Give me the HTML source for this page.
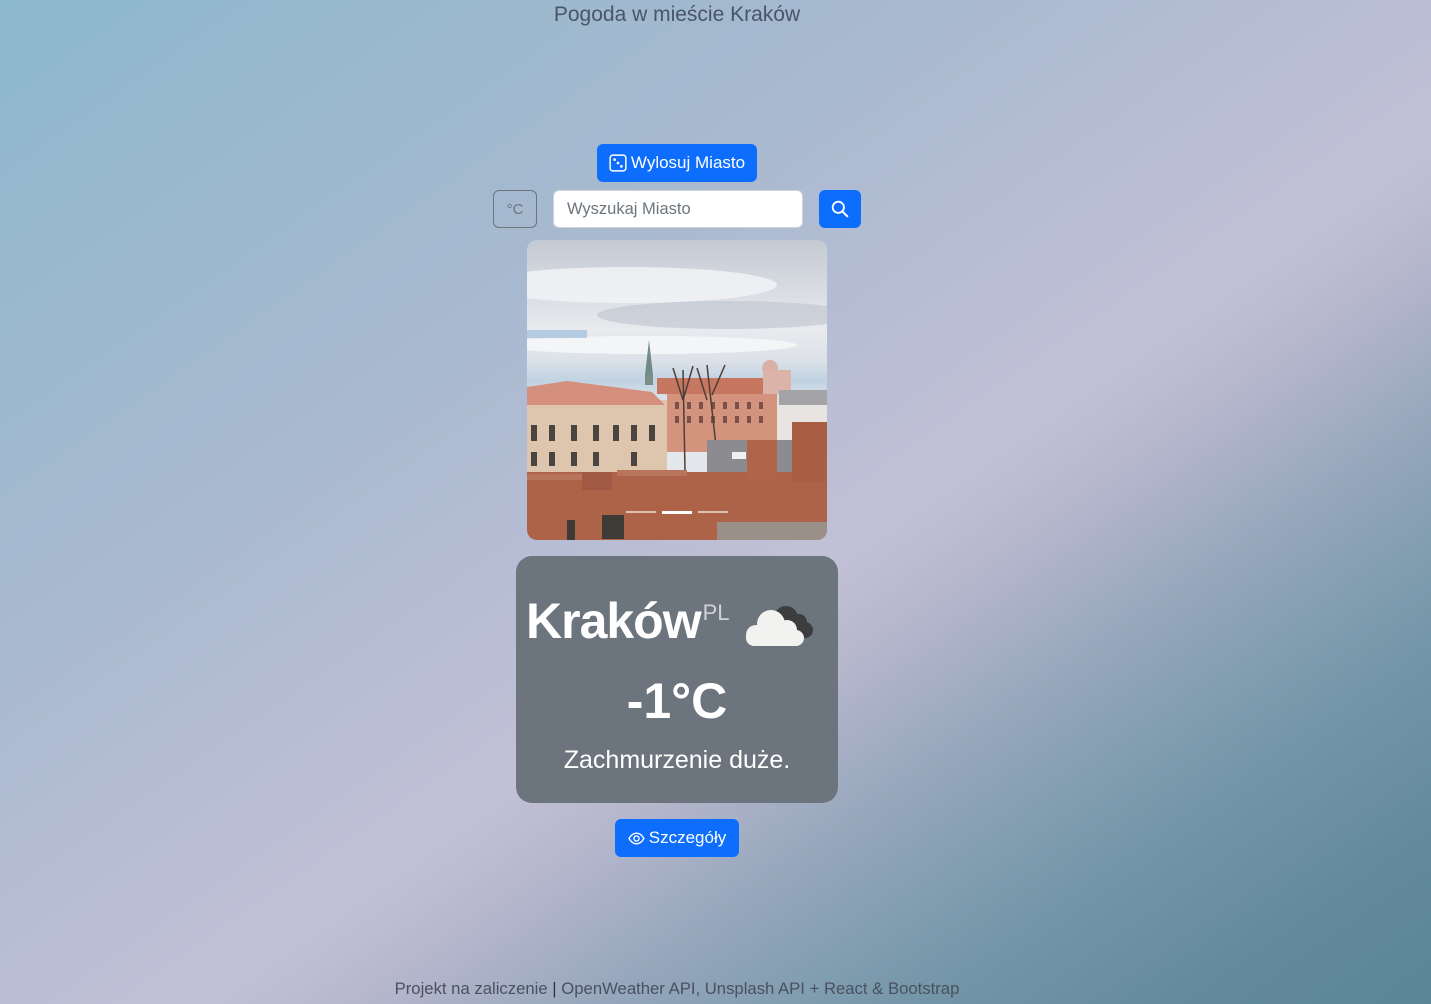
<!DOCTYPE html>
<html><head><meta charset="utf-8"><style>
*{box-sizing:border-box;margin:0;padding:0}
html,body{width:1431px;height:1004px;overflow:hidden}
body{font-family:"Liberation Sans",sans-serif;position:relative;
background:linear-gradient(145deg,#8cb8cc 0%,#a6b9cf 30%,#b6bdd4 46%,#c2c0d6 57%,#b4b6cc 63%,#92a5ba 72%,#7396a8 82%,#628a9b 92%,#5b8596 100%);}
.title{position:absolute;top:3px;left:0;width:1354px;text-align:center;font-size:21px;color:#4a5568}
.btn{position:absolute;background:#0d6efd;color:#fff;border-radius:6px;display:flex;align-items:center;justify-content:center;font-size:17px}
.card{position:absolute;left:516px;top:556px;width:322px;height:247px;background:#6c757d;border-radius:16px;color:#fff}
.foot{position:absolute;top:979px;left:0;width:1354px;text-align:center;font-size:16.7px;color:#4a5160}
</style></head><body>
<div class="title">Pogoda w mieście Kraków</div>
<div class="btn" style="left:597px;top:144px;width:160px;height:38px">
<svg width="18" height="18" viewBox="0 0 16 16" style="margin-right:4px"><rect x="1" y="1" width="14" height="14" rx="2.5" fill="none" stroke="#fff" stroke-width="1.3"/><circle cx="5" cy="5" r="1.2" fill="#fff"/><circle cx="8" cy="8" r="1.2" fill="#fff"/><circle cx="11" cy="11" r="1.2" fill="#fff"/></svg>Wylosuj Miasto</div>
<div style="position:absolute;left:493px;top:190px;width:44px;height:38px;border:1px solid #6c757d;border-radius:6px;color:#6c757d;font-size:15px;display:flex;align-items:center;justify-content:center">°C</div>
<div style="position:absolute;left:553px;top:190px;width:250px;height:38px;background:#fff;border:1px solid #ced4da;border-radius:6px;padding-left:13px;line-height:37px;font-size:16.5px;color:#6c757d">Wyszukaj Miasto</div>
<div class="btn" style="left:819px;top:190px;width:42px;height:38px"><svg width="18" height="18" viewBox="0 0 16 16"><circle cx="6.5" cy="6.5" r="5" fill="none" stroke="#fff" stroke-width="1.6"/><path d="M10.2 10.2L14.5 14.5" stroke="#fff" stroke-width="1.8" stroke-linecap="round"/></svg></div>
<svg style="position:absolute;left:527px;top:240px;border-radius:10px" width="300" height="300" viewBox="0 0 300 300">
<defs><linearGradient id="sk" x1="0" y1="0" x2="0" y2="1"><stop offset="0" stop-color="#c4cad3"/><stop offset=".3" stop-color="#e8eaee"/><stop offset=".4" stop-color="#dde2e8"/><stop offset=".47" stop-color="#c0d2e2"/><stop offset=".55" stop-color="#e4e7ec"/></linearGradient></defs>
<rect width="300" height="300" fill="url(#sk)"/>
<ellipse cx="100" cy="45" rx="150" ry="18" fill="#f3f4f6" opacity=".8"/>
<ellipse cx="200" cy="75" rx="130" ry="14" fill="#b6bec9" opacity=".5"/>
<ellipse cx="120" cy="105" rx="150" ry="9" fill="#f5f6f8" opacity=".9"/>
<rect x="0" y="90" width="60" height="8" fill="#9ebfdc" opacity=".7"/>
<rect x="0" y="160" width="140" height="78" fill="#ddc5ae"/>
<polygon points="0,147 40,141 125,152 138,165 0,165" fill="#d4907c"/>
<g fill="#4a4540"><rect x="4" y="185" width="6" height="16"/><rect x="22" y="185" width="6" height="16"/><rect x="44" y="185" width="6" height="16"/><rect x="66" y="185" width="6" height="16"/><rect x="86" y="185" width="6" height="16"/><rect x="104" y="185" width="6" height="16"/><rect x="122" y="185" width="6" height="16"/>
<rect x="4" y="212" width="6" height="14"/><rect x="22" y="212" width="6" height="14"/><rect x="44" y="212" width="6" height="14"/><rect x="66" y="212" width="6" height="14"/><rect x="104" y="212" width="6" height="14"/></g>
<rect x="140" y="150" width="110" height="62" fill="#d4937c"/>
<rect x="130" y="138" width="120" height="16" fill="#c77760"/>
<g fill="#7a5048"><rect x="148" y="162" width="4" height="7"/><rect x="160" y="162" width="4" height="7"/><rect x="172" y="162" width="4" height="7"/><rect x="184" y="162" width="4" height="7"/><rect x="196" y="162" width="4" height="7"/><rect x="208" y="162" width="4" height="7"/><rect x="220" y="162" width="4" height="7"/><rect x="232" y="162" width="4" height="7"/>
<rect x="148" y="176" width="4" height="7"/><rect x="160" y="176" width="4" height="7"/><rect x="172" y="176" width="4" height="7"/><rect x="184" y="176" width="4" height="7"/><rect x="196" y="176" width="4" height="7"/><rect x="208" y="176" width="4" height="7"/><rect x="220" y="176" width="4" height="7"/><rect x="232" y="176" width="4" height="7"/></g>
<g stroke="#4d3f38" stroke-width="1.5" fill="none"><path d="M158 230L156 130M156 160L146 128M156 160L166 126M190 215L180 125M180 160L170 128M185 155L198 125"/></g>
<polygon points="118,135 122,100 126,135" fill="#6f8c86"/>
<rect x="118" y="135" width="8" height="10" fill="#7c8e88"/>
<circle cx="243" cy="128" r="8" fill="#d8b0a8"/>
<rect x="236" y="130" width="28" height="24" fill="#dbb3a8"/>
<rect x="252" y="150" width="48" height="18" fill="#a4a4a6"/>
<rect x="250" y="165" width="50" height="35" fill="#e8e4e2"/>
<rect x="180" y="200" width="85" height="45" fill="#8c8c90"/>
<rect x="205" y="212" width="14" height="7" fill="#f0f0f0"/><rect x="230" y="202" width="14" height="6" fill="#e0e0e4"/>
<rect x="0" y="232" width="300" height="68" fill="#ad6348"/>
<rect x="0" y="234" width="80" height="6" fill="#b8755c"/><rect x="90" y="230" width="70" height="6" fill="#b8755c"/>
<rect x="55" y="232" width="30" height="18" fill="#a05a44"/>
<rect x="220" y="200" width="30" height="40" fill="#b0654a"/>
<rect x="265" y="182" width="35" height="60" fill="#aa5f45"/>
<rect x="75" y="275" width="22" height="24" fill="#3e3a36"/>
<rect x="40" y="280" width="8" height="20" fill="#3e3a36"/>
<rect x="190" y="282" width="110" height="18" fill="#9a9088"/>
<rect x="99" y="271" width="30" height="2" fill="#fff" opacity=".6"/>
<rect x="135" y="271" width="30" height="3" fill="#fff"/>
<rect x="171" y="271" width="30" height="2" fill="#fff" opacity=".6"/>
</svg>
<div class="card">
<div style="position:absolute;left:10px;top:36px;font-size:50px;font-weight:bold;letter-spacing:-1px">Kraków<span style="font-size:22px;font-weight:normal;color:#cfd3d6;vertical-align:top;position:relative;top:8px;margin-left:2px;letter-spacing:0">PL</span></div>
<svg style="position:absolute;left:226px;top:44px" width="72" height="48" viewBox="0 0 72 48">
<g fill="#3d3d3f"><circle cx="44" cy="18" r="12"/><circle cx="57" cy="22" r="8"/><circle cx="63" cy="30" r="8"/><rect x="40" y="22" width="30" height="16" rx="8"/></g>
<g fill="#f2f2f0"><circle cx="29" cy="24" r="14"/><circle cx="45" cy="30" r="10"/><circle cx="14" cy="35" r="10"/><rect x="4" y="30" width="58" height="16" rx="8"/></g>
</svg>
<div style="position:absolute;left:0;width:322px;top:116px;text-align:center;font-size:50px;font-weight:bold">-1°C</div>
<div style="position:absolute;left:0;width:322px;top:190px;text-align:center;font-size:25px">Zachmurzenie duże.</div>
</div>
<div class="btn" style="left:615px;top:819px;width:124px;height:38px"><svg width="17" height="17" viewBox="0 0 16 16" style="margin-right:4px"><path d="M1 8C3 4.5 5.5 3 8 3s5 1.5 7 5c-2 3.5-4.5 5-7 5S3 11.5 1 8z" fill="none" stroke="#fff" stroke-width="1.3"/><circle cx="8" cy="8" r="2.4" fill="none" stroke="#fff" stroke-width="1.3"/></svg>Szczegóły</div>
<div class="foot">Projekt na zaliczenie <span style="color:#333">|</span> OpenWeather API, Unsplash API + React &amp; Bootstrap</div>
</body></html>
